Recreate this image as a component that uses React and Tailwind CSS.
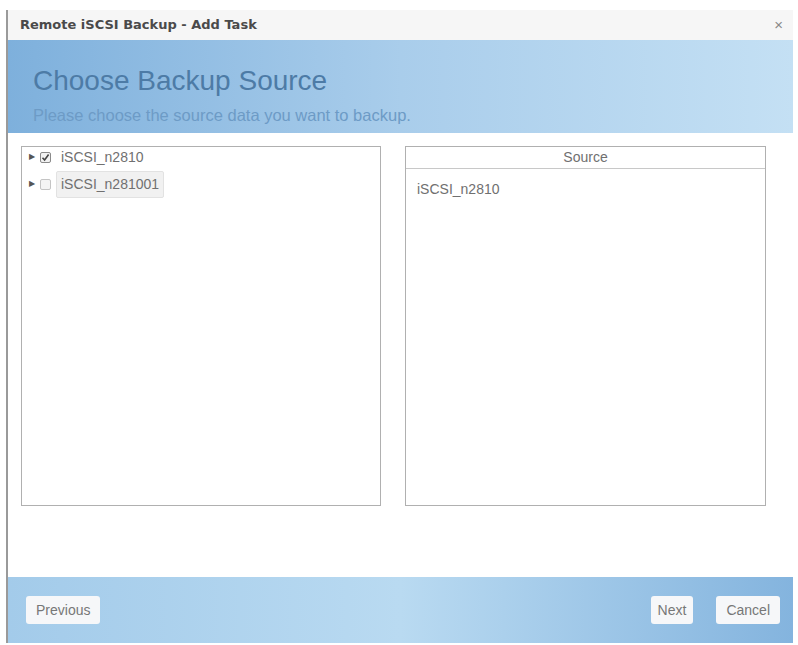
import React, { useState } from 'react';

const TreeRow = ({ label, checked, selected, onToggle }) => (
    <div className="flex items-center h-[20px]">
        <span className="w-[9px] text-[8px] text-[#555] leading-none">&#9654;</span>
        <button
            onClick={onToggle}
            className={`ml-[2px] flex h-[11px] w-[11px] items-center justify-center rounded-[2px] border ${checked ? 'border-[#8a8a8a] bg-[#f2f2f2]' : 'border-[#c4c4c4] bg-[#f4f4f4]'}`}
        >
            {checked && (
                <svg width="9" height="9" viewBox="0 0 9 9">
                    <path d="M1.5 4.8 L3.6 7 L7.6 1.6" fill="none" stroke="#444" strokeWidth="1.6" />
                </svg>
            )}
        </button>
        <span className={`ml-[5px] px-[4px] py-[2px] rounded-[2px] ${selected ? 'bg-[#f1f1f1] border border-[#e2e2e2]' : 'border border-transparent'}`}>
            {label}
        </span>
    </div>
);

export default function App() {
    const [items, setItems] = useState([
        { id: 'n2810', label: 'iSCSI_n2810', checked: true },
        { id: 'n281001', label: 'iSCSI_n281001', checked: false },
    ]);

    const toggle = (id) => {
        setItems(prev => prev.map(it => it.id === id ? { ...it, checked: !it.checked } : it));
    };

    return (
        <div className="h-[645px] w-[798px] bg-white pt-[10px] pl-[6px] pr-[5px] font-['Liberation_Sans',Arial,sans-serif]">
            <div className="flex h-[633px] flex-col border-l-[2px] border-[#9a9a9a] bg-white">
                {/* Title bar */}
                <div className="flex h-[30px] items-center justify-between bg-[#f6f6f6] pl-[12px] pr-[10px]">
                    <span className="font-['DejaVu_Sans',sans-serif] text-[13px] font-bold text-[#4a4a4a]">Remote iSCSI Backup - Add Task</span>
                    <span className="text-[15px] text-[#888]">&times;</span>
                </div>

                {/* Header */}
                <div className="h-[93px] bg-gradient-to-r from-[#7eb0dc] via-[#a9cdeb] to-[#c4e0f4] pl-[25px] pt-[25px]">
                    <h1 className="text-[28px] leading-[32px] text-[#4d7ba6]">Choose Backup Source</h1>
                    <p className="mt-[9px] text-[16.5px] leading-[18px] text-[#6d9bc6]">Please choose the source data you want to backup.</p>
                </div>

                {/* Content */}
                <div className="flex flex-1 gap-[24px] pl-[13px] pt-[13px] text-[14px] text-[#707070]">
                    <div className="flex h-[360px] w-[360px] flex-col gap-[7px] border border-[#b0b0b0] px-[7px]">
                        {items.map((it, i) => (
                            <TreeRow
                                key={it.id}
                                label={it.label}
                                checked={it.checked}
                                selected={i === 1}
                                onToggle={() => toggle(it.id)}
                            />
                        ))}
                    </div>
                    <div className="h-[360px] w-[361px] border border-[#b0b0b0]">
                        <div className="h-[22px] border-b border-[#c8c8c8] text-center leading-[21px]">Source</div>
                        <div className="pl-[11px] pt-[10px]">
                            {items.filter(it => it.checked).map(it => (
                                <div key={it.id}>{it.label}</div>
                            ))}
                        </div>
                    </div>
                </div>

                {/* Footer */}
                <div className="flex h-[66px] items-center justify-between bg-gradient-to-r from-[#a3cbea] via-[#b9daf1] to-[#84b4de] pl-[18px] pr-[13px]">
                    <button className="h-[28px] rounded-[3px] bg-[#f6f7f9] px-[10px] text-[14px] text-[#777]">Previous</button>
                    <div className="flex gap-[23px]">
                        <button className="h-[28px] rounded-[3px] bg-[#f6f7f9] px-[7px] text-[14px] text-[#777]">Next</button>
                        <button className="h-[28px] rounded-[3px] bg-[#f6f7f9] px-[10px] text-[14px] text-[#777]">Cancel</button>
                    </div>
                </div>
            </div>
        </div>
    );
}
